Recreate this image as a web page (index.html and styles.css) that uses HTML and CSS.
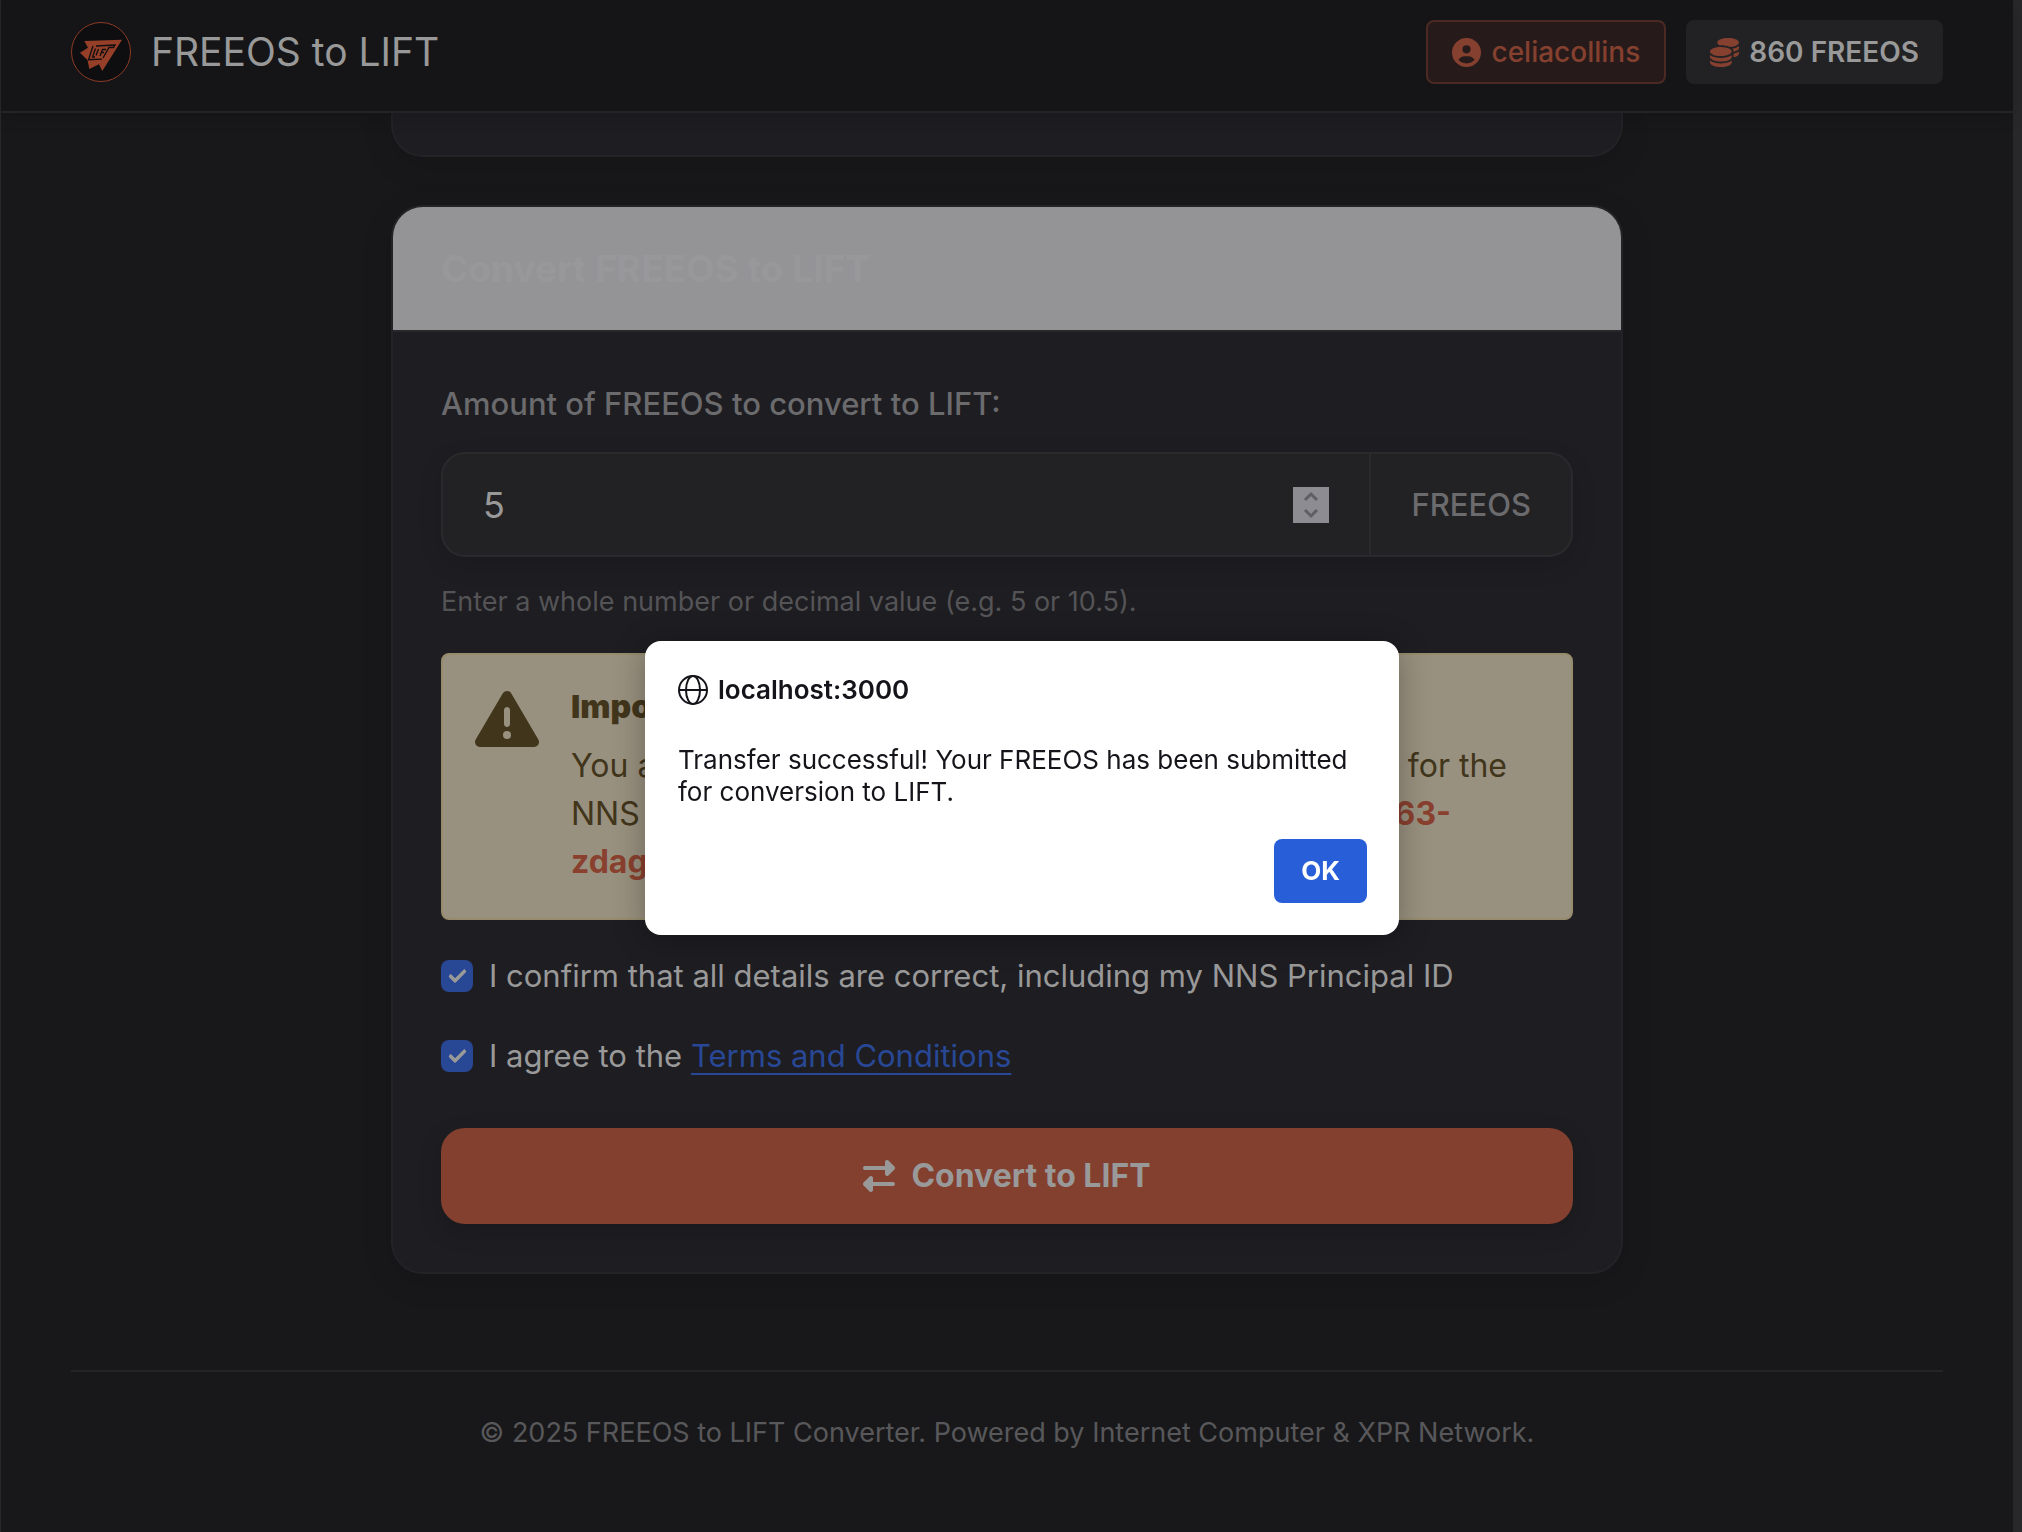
FILE: index.html
```html
<!DOCTYPE html>
<html lang="en">
<head>
<meta charset="utf-8">
<meta name="viewport" content="width=device-width, initial-scale=1">
<title>FREEOS to LIFT</title>
<link rel="stylesheet" href="styles.css">
</head>
<body>
<div class="page">
  <header class="topbar">
    <div class="brand">
      <svg class="brand-logo" viewBox="0 0 60 60" aria-hidden="true">
        <circle cx="30" cy="30" r="29.5" fill="#0e0e10" stroke="#8c3b26"/>
        <path fill="#963f28" d="M13.3 19 51 17.7 31.3 49 28 42.3 18.3 47 16.5 38 9 30.7 17 25.7z"/>
        <g fill="none" stroke="#0e0e10" stroke-width="1.3">
          <path d="M22 24 17.5 37.7 31 37.2M25 24 44 23 42.5 25.5H38L32 36M24.500 26.500 21.5 35H24M27.500 27 25 33.500M29 34 31.500 27.500H35M30.500 30.500h2.500"/>
        </g>
      </svg>
      <span class="brand-name">FREEOS to LIFT</span>
    </div>
    <div class="account">
      <button class="badge badge-user" type="button">
        <svg class="badge-icon" viewBox="0 0 512 512" aria-hidden="true"><path fill="currentColor" d="M399 384.2C376.900 345.800 335.400 320 288 320H224c-47.400 0-88.900 25.800-111 64.200c35.200 39.200 86.200 63.800 143 63.800s107.800-24.700 143-63.800zM0 256a256 256 0 1 1 512 0A256 256 0 1 1 0 256zm256 16a72 72 0 1 0 0-144 72 72 0 1 0 0 144z"/></svg>
        <span>celiacollins</span>
      </button>
      <div class="badge badge-balance">
        <svg class="badge-icon" viewBox="0 0 512 512" aria-hidden="true"><path fill="#85402f" d="M512 80c0 18-14.300 34.600-38.400 48c-29.100 16.100-72.500 27.500-122.300 30.900c-3.700-1.800-7.400-3.500-11.300-5C300.600 137.400 248.200 128 192 128c-8.300 0-16.400 .2-24.500 .6l-1.100-.6C142.300 114.600 128 98 128 80c0-44.200 86-80 192-80S512 35.800 512 80zM160.700 161.100c10.200-.7 20.700-1.100 31.300-1.100c62.200 0 117.400 12.300 152.500 31.400C369.300 204.900 384 221.700 384 240c0 4-.7 7.900-2.100 11.700c-4.600 13.200-17 25.300-35 35.500l-1.300 .7c-35 19.400-90.800 32-153.600 32c-59.600 0-112.900-11.300-148.200-29.100c-1.900-.9-3.700-1.900-5.500-2.900C14.300 274.600 0 258 0 240c0-34.800 53.400-64.500 128-75.400c10.500-1.500 21.400-2.700 32.700-3.500zM416 240c0-21.900-10.600-39.900-24.100-53.400c28.300-4.400 54.200-11.400 76.200-20.500c16.300-6.800 31.500-15.200 43.900-25.500V176c0 19.300-16.500 37.100-43.800 50.900c-14.600 7.400-32.400 13.700-52.400 18.500c.1-1.800 .2-3.500 .2-5.300zm-32 96c0 18-14.300 34.600-38.400 48c-1.800 1-3.600 1.900-5.500 2.900C304.900 404.700 251.600 416 192 416c-62.800 0-118.600-12.600-153.600-32C14.300 370.600 0 354 0 336V300.600c12.500 10.300 27.600 18.700 43.900 25.500C83.400 342.600 135.800 352 192 352s108.600-9.400 148.100-25.900c7.800-3.200 15.300-6.900 22.400-10.900c6.100-3.400 11.800-7.200 17.200-11.200c1.500-1.100 2.900-2.300 4.300-3.400V336zm32 0V278.100c19-4.200 36.500-9.500 52.100-16c16.300-6.800 31.500-15.200 43.900-25.500V272c0 10.500-5 21-14.900 30.900c-16.300 16.300-45 29.700-81.300 38.400c.1-1.700 .2-3.500 .2-5.300zM192 448c56.200 0 108.600-9.400 148.100-25.900c16.300-6.800 31.500-15.200 43.900-25.500V432c0 44.200-86 80-192 80S0 476.200 0 432V396.600c12.500 10.300 27.600 18.700 43.900 25.500C83.400 438.600 135.800 448 192 448z"/></svg>
        <span>860 FREEOS</span>
      </div>
    </div>
  </header>

  <main class="content">
    <section class="card card-scrolled"></section>

    <section class="card">
      <h2 class="card-title">Convert FREEOS to LIFT</h2>
      <form class="card-body">
        <label class="field-label" for="amount">Amount of FREEOS to convert to LIFT:</label>
        <div class="amount">
          <input class="amount-input" id="amount" type="number" value="5">
          <svg class="amount-stepper" viewBox="0 0 36 36" aria-hidden="true"><path d="M12 13l6-6 6 6M12 23l6 6 6-6" fill="none" stroke="#5f5e66" stroke-width="3"/></svg>
          <span class="amount-unit">FREEOS</span>
        </div>
        <p class="hint">Enter a whole number or decimal value (e.g. 5 or 10.5).</p>

        <div class="alert">
          <svg class="alert-icon" viewBox="0 0 512 512" aria-hidden="true"><path fill="currentColor" d="M256 32c14.200 0 27.300 7.500 34.500 19.800l216 368c7.300 12.400 7.300 27.700 .2 40.100S486.300 480 472 480H40c-14.300 0-27.600-7.700-34.700-20.100s-7-27.800 .2-40.100l216-368C228.700 39.500 241.800 32 256 32zm0 128c-13.300 0-24 10.700-24 24V296c0 13.300 10.700 24 24 24s24-10.700 24-24V184c0-13.300-10.700-24-24-24zm32 224a32 32 0 1 0 -64 0 32 32 0 1 0 64 0z"/></svg>
          <div class="alert-text">
            <h3 class="alert-title">Important</h3>
            <p class="alert-line"><span>You are</span><span>for the</span></p>
            <p class="alert-line"><span>NNS</span><strong class="alert-id-end">63-</strong></p>
            <p class="alert-line"><strong>zdag</strong></p>
          </div>
        </div>

        <div class="checks">
          <label class="check"><input type="checkbox" checked><span>I confirm that all details are correct, including my NNS Principal ID</span></label>
          <label class="check"><input type="checkbox" checked><span>I agree to the <a href="#terms">Terms and Conditions</a></span></label>
        </div>

        <button class="convert" type="button">
          <svg class="convert-icon" viewBox="0 0 512 512" aria-hidden="true"><path fill="currentColor" d="M32 96l320 0V32c0-12.900 7.800-24.600 19.800-29.600s25.700-2.200 34.900 6.900l96 96c6 6 9.400 14.100 9.400 22.600s-3.400 16.600-9.400 22.600l-96 96c-9.200 9.200-22.900 11.900-34.900 6.900s-19.800-16.600-19.800-29.600V160L32 160c-17.700 0-32-14.300-32-32s14.300-32 32-32zM480 352c17.700 0 32 14.300 32 32s-14.300 32-32 32H160v64c0 12.900-7.800 24.600-19.800 29.600s-25.700 2.200-34.900-6.900l-96-96c-6-6-9.400-14.100-9.400-22.600s3.400-16.600 9.400-22.600l96-96c9.200-9.200 22.900-11.900 34.900-6.900s19.800 16.600 19.800 29.600l0 64H480z"/></svg>
          <span>Convert to LIFT</span>
        </button>
      </form>
    </section>
  </main>

  <footer class="footer">© 2025 FREEOS to LIFT Converter. Powered by Internet Computer &amp; XPR Network.</footer>
</div>
<div class="scroll-track"></div>

<dialog class="dialog" open aria-labelledby="dialog-origin">
  <h1 class="dialog-origin" id="dialog-origin">
    <svg class="dialog-icon" viewBox="0 0 30 30" fill="none" stroke="currentColor" stroke-width="2" aria-hidden="true"><circle cx="15" cy="15" r="14"/><ellipse cx="15" cy="15" rx="7" ry="14"/><path d="M1 15h28"/></svg>
    <span>localhost:3000</span>
  </h1>
  <p class="dialog-message">Transfer successful! Your FREEOS has been submitted for conversion to LIFT.</p>
  <button class="dialog-ok" type="button">OK</button>
</dialog>
</body>
</html>
```
FILE: styles.css
```css
*, *::before, *::after { box-sizing: border-box; }

body {
  margin: 0;
  display: flex;
  min-height: 100vh;
  background: #18181a;
  color: #999999;
  font: 400 31px/48px Inter, "Liberation Sans", sans-serif;
}

h1, h2, h3, p { margin: 0; }
button, input { font: inherit; color: inherit; }

.page {
  flex: 1;
  min-width: 0;
  display: flex;
  flex-direction: column;
  border-left: 1px solid #28282b;
}

.scroll-track { width: 9px; background: #28282b; }

.topbar {
  position: relative;
  display: flex;
  align-items: center;
  justify-content: space-between;
  padding: 20px 70px 27px;
  background: #151517;
  border-bottom: 2px solid #242426;
  box-shadow: 0 4px 16px rgba(0, 0, 0, 0.16);
}

.brand { display: flex; align-items: center; gap: 20px; }
.brand-logo { width: 60px; height: 60px; }
.brand-name { font-size: 39px; }

.account { display: flex; gap: 20px; }

.badge {
  display: flex;
  align-items: center;
  gap: 10px;
  height: 64px;
  padding: 0 22px;
  border: 2px solid #222224;
  border-radius: 8px;
  background: #222224;
  font-size: 28px;
  font-weight: 600;
}

.badge-user { background: #261b1a; border-color: #4a2a23; color: #85402f; font-weight: 500; padding: 0 24px; }
.badge-icon { width: 29px; height: 29px; }

.content {
  width: 100%;
  max-width: 1232px;
  margin: 0 auto;
  display: flex;
  flex-direction: column;
  gap: 48px;
}

.card {
  overflow: hidden;
  background: #1e1d21;
  border: 2px solid #232326;
  border-radius: 32px;
  box-shadow: 0 8px 32px rgba(0, 0, 0, 0.12);
}

.card-scrolled { height: 44px; border-top: 0; border-radius: 0 0 32px 32px; }

.card-title {
  padding: 38px 48px 37px;
  background: #949496;
  border-bottom: 2px solid #28282a;
  color: #98989a;
  font-size: 37px;
  font-weight: 700;
}

.card-body { display: flex; flex-direction: column; padding: 48px; }

.field-label { margin-bottom: 24px; color: #6b6b6e; font-weight: 500; }

.amount {
  display: flex;
  align-items: center;
  height: 105px;
  background: #222224;
  border: 2px solid #2a2a2c;
  border-radius: 24px;
  box-shadow: 0 8px 24px rgba(0, 0, 0, 0.12);
}

.amount-input {
  flex: 1;
  min-width: 0;
  padding: 0 40px;
  background: none;
  border: 0;
  outline: 0;
  font-size: 36px;
  appearance: textfield;
}

.amount-input::-webkit-inner-spin-button { appearance: none; margin: 0; }
.amount-stepper { width: 36px; height: 36px; margin-right: 40px; background: #8d8c93; }

.amount-unit {
  display: flex;
  align-items: center;
  align-self: stretch;
  padding: 0 40px;
  border-left: 2px solid #2a2a2c;
  color: #6b6b6e;
  font-weight: 500;
}

.hint { margin: 24px 0 30px; color: #545457; font-size: 27px; line-height: 42px; }

.alert {
  display: flex;
  gap: 32px;
  padding: 32px;
  background: #99917f;
  border: 2px solid #968b6c;
  border-radius: 8px;
  color: #41351b;
  font-size: 32px;
}

.alert-icon { flex: none; width: 64px; height: 64px; }
.alert-text { flex: 1; }
.alert-title { margin-bottom: 16px; font-size: 32px; font-weight: 900; line-height: 39px; }
.alert-line { display: flex; justify-content: space-between; padding-right: 32px; }
.alert-line strong { color: #8a402e; font-weight: 700; }
.alert-line .alert-id-end { padding-right: 56px; }

.checks { display: flex; flex-direction: column; gap: 32px; margin: 32px 0 48px; }
.check { display: flex; align-items: center; gap: 16px; }

.check input {
  appearance: none;
  flex: none;
  width: 32px;
  height: 32px;
  margin: 0;
  border-radius: 8px;
  background: #284896;
  display: grid;
  place-items: center;
}

.check input::before {
  content: "";
  width: 17px;
  height: 10px;
  border: solid #999999;
  border-width: 0 0 4px 4px;
  border-radius: 2px;
  transform: translateY(-2px) rotate(-45deg);
}

.check a {
  color: #284896;
  text-decoration: underline 2px;
  text-decoration-skip-ink: none;
  text-underline-offset: 6px;
}

.convert {
  display: flex;
  align-items: center;
  justify-content: center;
  gap: 16px;
  height: 96px;
  border: 0;
  border-radius: 24px;
  background: #84402f;
  box-shadow: 0 8px 24px rgba(0, 0, 0, 0.16);
  font-size: 32px;
  font-weight: 700;
}

.convert-icon { width: 32px; height: 32px; }

.footer {
  margin: 96px 70px 0;
  padding: 40px 0;
  border-top: 2px solid #242426;
  color: #58585b;
  font-size: 27px;
  line-height: 42px;
  text-align: center;
}

.dialog {
  position: fixed;
  top: 641px;
  left: 22px;
  right: 0;
  width: 754px;
  margin: 0 auto;
  padding: 33px 32px 32px 33px;
  display: flex;
  flex-direction: column;
  border: 0;
  border-radius: 16px;
  background: #ffffff;
  box-shadow: 0 4px 32px rgba(0, 0, 0, 0.3);
  color: #15141a;
  font-size: 26px;
  line-height: 32px;
}

.dialog-origin { display: flex; align-items: center; gap: 10px; font-size: 26px; font-weight: 600; }
.dialog-icon { width: 30px; height: 30px; }
.dialog-message { margin: 38px 0 31px; }

.dialog-ok {
  align-self: flex-end;
  height: 64px;
  padding: 0 27px;
  border: 0;
  border-radius: 8px;
  background: #285fd9;
  color: #ffffff;
  font-weight: 700;
}
```
